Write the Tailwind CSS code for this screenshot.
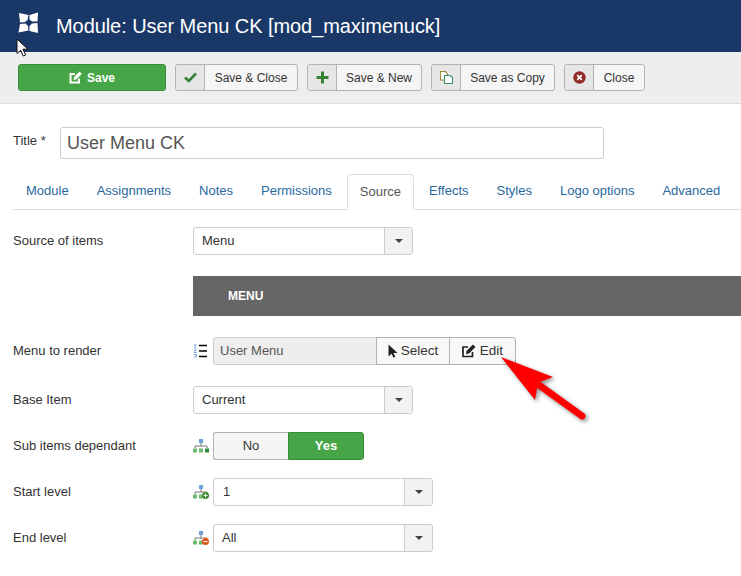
<!DOCTYPE html>
<html><head><meta charset="utf-8"><script src="https://cdn.jsdelivr.net/npm/@tailwindcss/browser@4"></script></head>
<body class="bg-white overflow-hidden">
<div class="relative w-[741px] h-[576px] overflow-hidden font-['Liberation_Sans',Arial,sans-serif] text-[13px] text-[#333]">
  <header class="h-[52px] bg-[#1a3867] flex items-center pl-[18px] gap-[17px] text-white">
    <svg class="w-[21px] h-[22px] mb-[6px]" viewBox="0 0 21 22" fill="#fff"><path d="M1 1 L10.5 3 L9.5 8 L7 10 L2 10.5 Z"/><path d="M20 0.5 L19.5 9.5 L14 9.5 L11.5 7.5 L11.5 3 Z"/><path d="M0.5 20.5 L2 12 L7.5 11.5 L10 14 L10.5 18.5 Z"/><path d="M20 21 L11.5 19 L11.5 14 L14 11.5 L19.5 11 Z"/></svg>
    <h1 class="text-[20px] leading-[28px] tracking-[-0.07px] font-normal">Module: User Menu CK [mod_maximenuck]</h1>
  </header>
  <div class="h-[52px] bg-[#eeeeee] border-b border-[#dddddd] flex items-start pt-[12px] pl-[18px] gap-[9px]">
    <button class="w-[148px] h-[27px] rounded-[3px] bg-[#46a546] border border-[#3a8a3a] text-white font-bold text-[12px] flex items-center justify-center gap-[5px]">
      <svg class="w-[13px] h-[13px]" viewBox="0 0 13 13" fill="none" stroke="#fff" stroke-width="2"><path d="M10 7.5V11.5H1.5V3H6"/><path d="M4.5 9L5 6L10.5 0.5L12.8 2.8L7.3 8.4Z" fill="#fff" stroke="none"/></svg>Save</button>
    <button class="h-[27px] w-[123px] rounded-[3px] bg-[#f5f5f5] border border-[#b3b3b3] flex items-center text-[12px]"><span class="w-[29px] h-full bg-[#e6e6e6] border-r border-[#b3b3b3] rounded-l-[3px] flex items-center justify-center"><svg class="w-[13px] h-[11px]" viewBox="0 0 13 11" fill="none" stroke="#378137" stroke-width="2.6"><path d="M1 5.5 L4.8 9 L12 1.5"/></svg></span><span class="flex-1 text-center">Save &amp; Close</span></button>
    <button class="h-[27px] w-[115px] rounded-[3px] bg-[#f5f5f5] border border-[#b3b3b3] flex items-center text-[12px]"><span class="w-[29px] h-full bg-[#e6e6e6] border-r border-[#b3b3b3] rounded-l-[3px] flex items-center justify-center"><svg class="w-[13px] h-[13px]" viewBox="0 0 13 13" fill="#378137"><path d="M5 0.5H8V5H12.5V8H8V12.5H5V8H0.5V5H5Z"/></svg></span><span class="flex-1 text-center">Save &amp; New</span></button>
    <button class="h-[27px] w-[124px] rounded-[3px] bg-[#f5f5f5] border border-[#b3b3b3] flex items-center text-[12px]"><span class="w-[29px] h-full bg-[#e6e6e6] border-r border-[#b3b3b3] rounded-l-[3px] flex items-center justify-center"><svg class="w-[13px] h-[13px] mb-[1px]" viewBox="0 0 13 13" fill="none" stroke-width="1.1"><path d="M0.5 0.5H5.5L7.5 3V9H0.5Z" stroke="#9a8a3c" fill="#fff"/><path d="M4.5 4.5H10L12.5 6.5V12.5H4.5Z" stroke="#3c8a6a" fill="#fff"/></svg></span><span class="flex-1 text-center">Save as Copy</span></button>
    <button class="h-[27px] w-[81px] rounded-[3px] bg-[#f5f5f5] border border-[#b3b3b3] flex items-center text-[12px]"><span class="w-[29px] h-full bg-[#e6e6e6] border-r border-[#b3b3b3] rounded-l-[3px] flex items-center justify-center"><svg class="w-[13px] h-[13px] mb-[1px]" viewBox="0 0 13 13"><circle cx="6.5" cy="6.5" r="6.2" fill="#942a25"/><path d="M4.2 4.2L8.8 8.8M8.8 4.2L4.2 8.8" stroke="#fff" stroke-width="1.8"/></svg></span><span class="flex-1 text-center">Close</span></button>
  </div>
  <main class="pl-[13px]">
    <div class="flex items-start pt-[23px] h-[70px]">
      <label class="w-[47px] pt-[6px] leading-[16px]">Title *</label>
      <input class="w-[544px] h-[32px] px-[6px] border border-[#cccccc] rounded-[3px] text-[18px] text-[#555] font-['Liberation_Sans',Arial,sans-serif]" value="User Menu CK">
    </div>
    <nav class="h-[36px] -mb-[1px] border-b border-[#dddddd] flex gap-[2px] leading-[18px]">
      <a class="h-[35px] px-[13px] pt-[8px] text-[#2a69a0]">Module</a>
      <a class="h-[35px] px-[13px] pt-[8px] text-[#2a69a0]">Assignments</a>
      <a class="h-[35px] px-[13px] pt-[8px] text-[#2a69a0]">Notes</a>
      <a class="h-[35px] px-[13px] pt-[8px] text-[#2a69a0]">Permissions</a>
      <a class="h-[36px] px-[12px] pt-[8px] text-[#555] bg-white border border-[#dddddd] border-b-white rounded-t-[4px]">Source</a>
      <a class="h-[35px] px-[13px] pt-[8px] text-[#2a69a0]">Effects</a>
      <a class="h-[35px] px-[13px] pt-[8px] text-[#2a69a0]">Styles</a>
      <a class="h-[35px] px-[13px] pt-[8px] text-[#2a69a0]">Logo options</a>
      <a class="h-[35px] px-[13px] pt-[8px] text-[#2a69a0] whitespace-nowrap">Advanced</a>
    </nav>
    <div class="flex items-center h-[28px] mt-[18px]">
      <label class="w-[180px]">Source of items</label>
      <div class="w-[220px] h-[28px] flex border border-[#cccccc] rounded-[3px]"><span class="flex-1 pl-[8px] leading-[26px]">Menu</span><span class="w-[28px] bg-[#f2f2f2] border-l border-[#cccccc] rounded-r-[3px] flex items-center justify-center"><span class="w-0 h-0 border-x-[4px] border-x-transparent border-t-[4px] border-t-[#444]"></span></span></div>
    </div>
    <div class="h-[40px] mt-[21px] ml-[180px] bg-[#666666] text-white font-bold text-[12px] flex items-center pl-[35px]">MENU</div>
    <div class="flex items-center h-[28px] mt-[21px]">
      <label class="w-[180px]">Menu to render</label>
      <svg class="w-[14px] h-[14px] mr-[6px]" viewBox="0 0 14 14" fill="none"><path d="M6 1.5H14M6 7H14M6 12.5H14" stroke="#000" stroke-width="1.3"/><path d="M1 1H3.5M2.2 1V3M1 4H3.5M1 6H3.5L1 8.5H3.5M1 10.5H3.5V13H1" stroke="#6f9de0" stroke-width="0.9"/></svg>
      <div class="w-[303px] h-[28px] flex">
        <span class="w-[164px] bg-[#eeeeee] border border-[#cccccc] rounded-l-[3px] pl-[6px] leading-[26px] text-[#555]">User Menu</span>
        <span class="w-[74px] -ml-[1px] bg-[#f8f8f8] border border-[#b3b3b3] flex items-center justify-center gap-[3px] text-[13.5px]"><svg class="w-[10px] h-[14px]" viewBox="0 0 10 14" fill="#222"><path d="M0.5 0.5V12.5L3.5 9.8L5.6 13.8L7.4 12.8L5.4 9H9.5Z"/></svg>Select</span>
        <span class="w-[67px] -ml-[1px] bg-[#f8f8f8] border border-[#b3b3b3] rounded-r-[3px] flex items-center justify-center gap-[4px] text-[13.5px]"><svg class="w-[14px] h-[14px]" viewBox="0 0 14 14" fill="none" stroke="#222" stroke-width="1.7"><path d="M10.5 8V12.5H1V3H6"/><path d="M4 10L4.5 7L11 0.5L13.5 3L7 9.5Z" fill="#222" stroke="none"/></svg>Edit</span>
      </div>
    </div>
    <div class="flex items-center h-[28px] mt-[21px]">
      <label class="w-[180px]">Base Item</label>
      <div class="w-[220px] h-[28px] flex border border-[#cccccc] rounded-[3px]"><span class="flex-1 pl-[8px] leading-[26px]">Current</span><span class="w-[28px] bg-[#f2f2f2] border-l border-[#cccccc] rounded-r-[3px] flex items-center justify-center"><span class="w-0 h-0 border-x-[4px] border-x-transparent border-t-[4px] border-t-[#444]"></span></span></div>
    </div>
    <div class="flex items-center h-[28px] mt-[18px]">
      <label class="w-[180px]">Sub items dependant</label>
      <svg class="w-[16px] h-[14px] mr-[4px]" viewBox="0 0 16 14"><rect x="6" y="0" width="4" height="4" fill="#6f9de0"/><path d="M8 4V7M2 9V7H14V9" stroke="#777" fill="none"/><rect x="0" y="9.5" width="4" height="4" fill="#6dbb6d"/><rect x="6" y="9.5" width="4" height="4" fill="#6dbb6d"/><rect x="12" y="9.5" width="4" height="4" fill="#2e8b3d"/></svg>
      <div class="w-[151px] h-[28px] flex font-medium">
        <span class="w-[75px] bg-[#f5f5f5] border border-[#b3b3b3] border-r-0 rounded-l-[3px] flex items-center justify-center">No</span>
        <span class="w-[76px] bg-[#46a546] border border-[#3a8a3a] rounded-r-[3px] text-white font-bold flex items-center justify-center">Yes</span>
      </div>
    </div>
    <div class="flex items-center h-[28px] mt-[18px]">
      <label class="w-[180px]">Start level</label>
      <svg class="w-[16px] h-[14px] mr-[4px]" viewBox="0 0 16 14"><rect x="6" y="0" width="4" height="4" fill="#6f9de0"/><path d="M8 4V7M2 9V7H14V9" stroke="#777" fill="none"/><rect x="0" y="9.5" width="4" height="4" fill="#6dbb6d"/><rect x="6" y="9.5" width="4" height="4" fill="#6dbb6d"/><circle cx="12.5" cy="10.5" r="3.5" fill="#3a8a2e"/><path d="M10.5 10.5H14.5M12.5 8.5V12.5" stroke="#fff"/></svg>
      <div class="w-[220px] h-[28px] flex border border-[#cccccc] rounded-[3px]"><span class="flex-1 pl-[9px] leading-[26px]">1</span><span class="w-[28px] bg-[#f2f2f2] border-l border-[#cccccc] rounded-r-[3px] flex items-center justify-center"><span class="w-0 h-0 border-x-[4px] border-x-transparent border-t-[4px] border-t-[#444]"></span></span></div>
    </div>
    <div class="flex items-center h-[28px] mt-[18px]">
      <label class="w-[180px]">End level</label>
      <svg class="w-[16px] h-[14px] mr-[4px]" viewBox="0 0 16 14"><rect x="6" y="0" width="4" height="4" fill="#6f9de0"/><path d="M8 4V7M2 9V7H14V9" stroke="#777" fill="none"/><rect x="0" y="9.5" width="4" height="4" fill="#6dbb6d"/><rect x="6" y="9.5" width="4" height="4" fill="#6dbb6d"/><circle cx="12.5" cy="10.5" r="3.5" fill="#e2561b"/><path d="M10.5 10.5H14.5" stroke="#fff"/></svg>
      <div class="w-[220px] h-[28px] flex border border-[#cccccc] rounded-[3px]"><span class="flex-1 pl-[8px] leading-[26px]">All</span><span class="w-[28px] bg-[#f2f2f2] border-l border-[#cccccc] rounded-r-[3px] flex items-center justify-center"><span class="w-0 h-0 border-x-[4px] border-x-transparent border-t-[4px] border-t-[#444]"></span></span></div>
    </div>
  </main>
  <svg class="absolute left-[16px] top-[38px] w-[14px] h-[20px]" viewBox="0 0 14 20"><path d="M1 1V15.5L4.6 12.2L7.2 18L9.6 17L7 11.2H11.8Z" fill="#fff" stroke="#111" stroke-width="1"/></svg>
  <svg class="absolute left-[495px] top-[350px] w-[100px] h-[76px] drop-shadow-[2px_2px_2px_rgba(0,0,0,0.45)]" viewBox="0 0 100 76"><path d="M44 35 L87 66" stroke="#fe0000" stroke-width="7" stroke-linecap="round"/><path d="M6 7 L58 27 L45 32 L42 38 L40 50 Z" fill="#fe0000"/></svg>
</div>
</body></html>
